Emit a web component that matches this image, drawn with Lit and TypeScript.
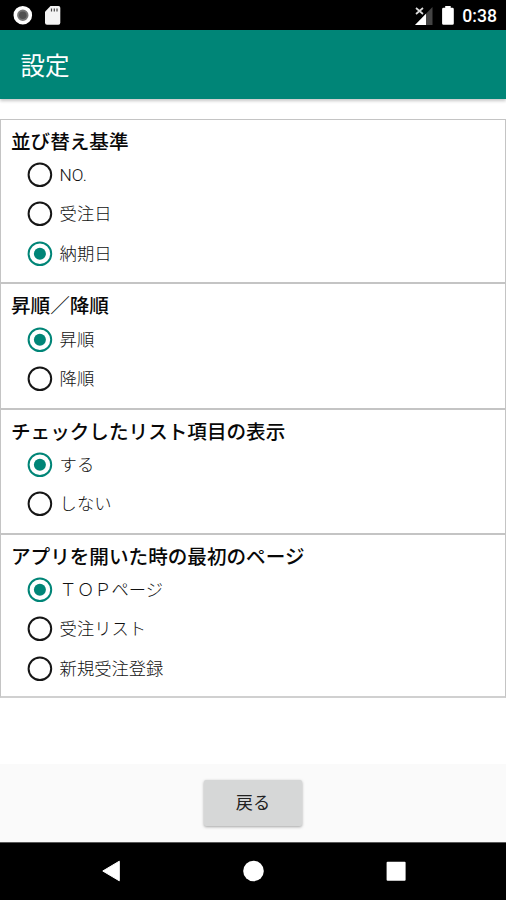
import { LitElement, html, css } from "lit";
import { customElement, property, state } from "lit/decorators.js";
import { classMap } from "lit/directives/class-map.js";

interface Group {
  title: string;
  options: string[];
  selected: number;
}

@customElement("radio-row")
class RadioRow extends LitElement {
  @property() label = "";
  @property({ type: Boolean }) checked = false;

  static styles = css`
    :host {
      display: flex;
      align-items: center;
      height: 39.3px;
      padding-left: 26px;
      color: #111;
      font-size: 17.3px;
      font-weight: 300;
      line-height: 24px;
    }
    svg {
      display: block;
      width: 26px;
      height: 26px;
      margin-right: 6.6px;
      flex: none;
    }
    .ring {
      fill: none;
      stroke: #161616;
      stroke-width: 2;
    }
    .on .ring {
      stroke: #008577;
    }
    .dot {
      fill: #008577;
    }
    .label {
      white-space: nowrap;
    }
  `;

  render() {
    return html`
      <svg viewBox="0 0 26 26" class=${classMap({ on: this.checked })}>
        <circle class="ring" cx="12.9" cy="12.8" r="11.3"></circle>
        <circle class="dot" cx="12.9" cy="12.8" r=${this.checked ? 6 : 0}></circle>
      </svg>
      <span class="label">${this.label}</span>
    `;
  }
}

@customElement("app-root")
class AppRoot extends LitElement {
  @state() groups: Group[] = [
    { title: "並び替え基準", options: ["NO.", "受注日", "納期日"], selected: 2 },
    { title: "昇順／降順", options: ["昇順", "降順"], selected: 0 },
    { title: "チェックしたリスト項目の表示", options: ["する", "しない"], selected: 0 },
    {
      title: "アプリを開いた時の最初のページ",
      options: ["ＴＯＰページ", "受注リスト", "新規受注登録"],
      selected: 0,
    },
  ];

  static styles = css`
    :host {
      display: flex;
      flex-direction: column;
      width: 506px;
      height: 900px;
      overflow: hidden;
      background: #fff;
      font-family: Roboto, "Noto Sans CJK JP", sans-serif;
    }
    .status {
      display: flex;
      align-items: center;
      justify-content: space-between;
      height: 30px;
      flex: none;
      background: #000;
      color: #fff;
    }
    .status svg {
      display: block;
    }
    .side {
      display: flex;
      align-items: center;
    }
    .right {
      padding-right: 9px;
    }
    .clock {
      font-size: 17.6px;
      font-weight: 500;
      line-height: 30px;
      height: 29px;
    }
    .bar {
      display: flex;
      align-items: center;
      height: 68.5px;
      flex: none;
      padding-left: 20.6px;
      box-sizing: border-box;
      background: #008577;
      color: #fff;
      font-size: 24.5px;
      font-weight: 400;
      box-shadow: 0 2px 3px rgba(0, 0, 0, 0.22);
    }
    .groups {
      margin-top: 20px;
      border: 1px solid #c4c4c4;
      border-bottom: 2px solid #d0d0d0;
      box-sizing: border-box;
      width: 506px;
      height: 579.5px;
      flex: none;
    }
    .group {
      box-sizing: border-box;
      padding: 10px 0 8.8px 0;
    }
    .group + .group {
      border-top: 2px solid #c4c4c4;
      padding-top: 10px;
    }
    .group + .group + .group {
      padding-top: 10.5px;
    }
    .group + .group + .group .title {
      height: 25.2px;
    }
    .title {
      height: 26px;
      padding-left: 10px;
      color: #080808;
      font-size: 19.6px;
      font-weight: 500;
      line-height: 26px;
      white-space: nowrap;
    }
    .footer {
      display: flex;
      align-items: flex-start;
      justify-content: center;
      height: 78px;
      flex: none;
      margin-top: auto;
      box-sizing: border-box;
      padding-top: 16px;
      background: #fafafa;
    }
    .back {
      width: 98px;
      height: 46px;
      padding: 0;
      border: 0;
      border-radius: 2px;
      background: #d6d7d7;
      color: #222;
      font-family: inherit;
      font-size: 17.2px;
      font-weight: 400;
      line-height: 46px;
      box-shadow: 0 1px 3px rgba(0, 0, 0, 0.35);
    }
    .nav {
      height: 58px;
      flex: none;
      background: #000;
    }
    .nav svg {
      display: block;
    }
  `;

  render() {
    return html`
      <div class="status">
        <svg width="80" height="30" viewBox="0 0 80 30">
          <circle cx="22.8" cy="15.2" r="7.5" fill="#777" stroke="#fff" stroke-width="3.6" />
          <circle cx="22.8" cy="15.2" r="3.8" fill="#505050" />
          <path d="M50.5 6H58.5Q60.3 6 60.3 7.8V22.8Q60.3 24.8 58.3 24.8H47Q45 24.8 45 22.8V11.8Z" fill="#f4f4f4" />
          <path d="M51.5 8.5v3M54.3 8.5v3M57 8.5v3" stroke="#444" stroke-width="1.2" />
        </svg>
        <div class="side right">
          <svg width="52" height="30" viewBox="410 0 52 30">
            <path d="M432.5 7V25H415Z" fill="#444" />
            <path d="M426 13.7V25H415Z" fill="#fff" />
            <path d="M416 8L423 14M423 8L416 14" stroke="#ddd" stroke-width="1.7" />
            <path d="M445.2 6H450.7V7.8H452.4Q453.8 7.8 453.8 9.2V23.4Q453.8 24.8 452.4 24.8H443.5Q442.1 24.8 442.1 23.4V9.2Q442.1 7.8 443.5 7.8H445.2Z" fill="#fff" />
          </svg>
          <span class="clock">0:38</span>
        </div>
      </div>
      <div class="bar">設定</div>
      <div class="groups">
        ${this.groups.map(
          (g) => html`<div class="group">
            <div class="title">${g.title}</div>
            ${g.options.map(
              (o, i) => html`<radio-row .label=${o} .checked=${i === g.selected}></radio-row>`
            )}
          </div>`
        )}
      </div>
      <div class="footer"><button class="back">戻る</button></div>
      <div class="nav">
        <svg width="506" height="58" viewBox="0 842 506 58">
          <path d="M0 842H506" stroke="#777" stroke-width="1.4" />
          <path d="M102.8 871L119.3 861.2V880.8Z" fill="#fff" stroke="#fff" stroke-width="1" stroke-linejoin="round" />
          <circle cx="253.5" cy="871" r="10.3" fill="#fff" />
          <rect x="386.6" y="861.8" width="19" height="19" rx="1" fill="#fff" />
        </svg>
      </div>
    `;
  }
}
